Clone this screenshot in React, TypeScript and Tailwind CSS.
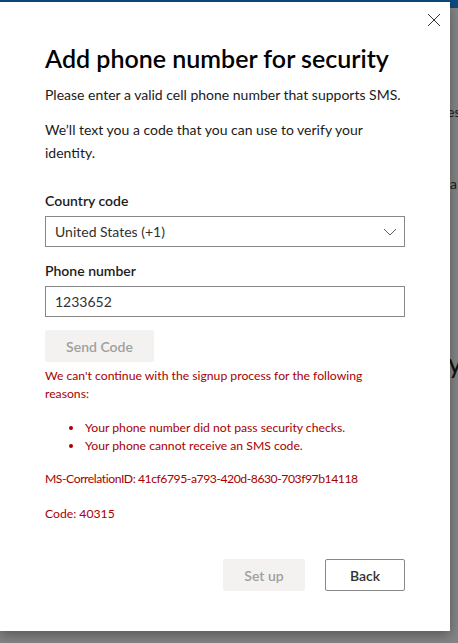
const font = { fontFamily: 'Lato, "Noto Sans", Arial, sans-serif' };

function CloseIcon() {
  return (
    <svg width="14" height="14" viewBox="0 0 14 14" fill="none" stroke="#323130" strokeWidth="1">
      <path d="M1 1L13 13M13 1L1 13" />
    </svg>
  );
}

function Chevron() {
  return (
    <svg width="14" height="8" viewBox="0 0 14 8" fill="none" stroke="#605e5c" strokeWidth="1">
      <path d="M1 1L7 7L13 1" />
    </svg>
  );
}

const reasons = [
  'Your phone number did not pass security checks.',
  'Your phone cannot receive an SMS code.',
];

export default function App() {
  return (
    <div className="relative h-[643px] w-[458px] overflow-hidden bg-[#858585]" style={font}>
      {/* page behind the overlay */}
      <div className="h-[8px] w-full bg-[#0f4a80]" />
      <span className="absolute left-[441px] top-[101px] whitespace-nowrap text-[14px] text-[#1b1b1b]">ses</span>
      <span className="absolute left-[450px] top-[173px] text-[14px] text-[#1b1b1b]">a</span>
      <span className="absolute left-[448px] top-[343px] text-[27px] text-[#111]">y</span>

      {/* dialog */}
      <div className="absolute left-0 top-[2px] flex h-[629px] w-[450px] flex-col bg-white px-[45px] shadow-[0_4px_12px_rgba(0,0,0,0.35)]">
        <button className="absolute left-[427px] top-[11px]">
          <CloseIcon />
        </button>

        <h1 className="mt-[40px] whitespace-nowrap text-[25px] font-semibold leading-[32px] text-black">
          Add phone number for security
        </h1>
        <p className="mt-[10px] text-[14px] leading-[22px] text-[#1b1b1b]">
          Please enter a valid cell phone number that supports SMS.
        </p>
        <p className="mt-[12px] text-[14px] leading-[23px] text-[#1b1b1b]">
          We’ll text you a code that you can use to verify your identity.
        </p>

        <label className="mt-[27px] text-[14px] font-semibold leading-[20px] text-[#1b1b1b]">Country code</label>
        <div className="mt-[5px] flex h-[31px] items-center justify-between border border-[#8a8886] pl-[9px] pr-[7px]">
          <span className="text-[14px] text-[#323130]">United States (+1)</span>
          <Chevron />
        </div>

        <label className="mt-[14px] text-[14px] font-semibold leading-[20px] text-[#1b1b1b]">Phone number</label>
        <div className="mt-[5px] flex h-[31px] items-center border border-[#8a8886] pl-[9px]">
          <span className="text-[14px] text-[#323130]">1233652</span>
        </div>

        <button className="mt-[13px] h-[32px] w-[109px] shrink-0 rounded-[2px] bg-[#f3f2f1] text-[14px] font-semibold text-[#a19f9d]">
          Send Code
        </button>

        <div className="mt-[5px] w-[330px] text-[12.2px] leading-[18px] text-[#a80000]">
          <p>We can't continue with the signup process for the following reasons:</p>
          <ul className="mt-[16px] pl-[24px]">
            {reasons.map((r) => (
              <li key={r} className="flex items-center gap-[12px]">
                <span className="h-[4px] w-[4px] rounded-full bg-[#a80000]" />
                <span>{r}</span>
              </li>
            ))}
          </ul>
          <p className="mt-[15px] whitespace-nowrap tracking-[-0.45px]">MS-CorrelationID: 41cf6795-a793-420d-8630-703f97b14118</p>
          <p className="mt-[17px]">Code: 40315</p>
        </div>

        <div className="mb-[40px] mt-auto flex justify-end gap-[20px]">
          <button className="h-[32px] w-[82px] rounded-[2px] bg-[#f3f2f1] text-[14px] font-semibold text-[#a19f9d]">
            Set up
          </button>
          <button className="h-[32px] w-[80px] rounded-[2px] border border-[#8a8886] bg-white text-[14px] font-semibold text-[#323130]">
            Back
          </button>
        </div>
      </div>
    </div>
  );
}
